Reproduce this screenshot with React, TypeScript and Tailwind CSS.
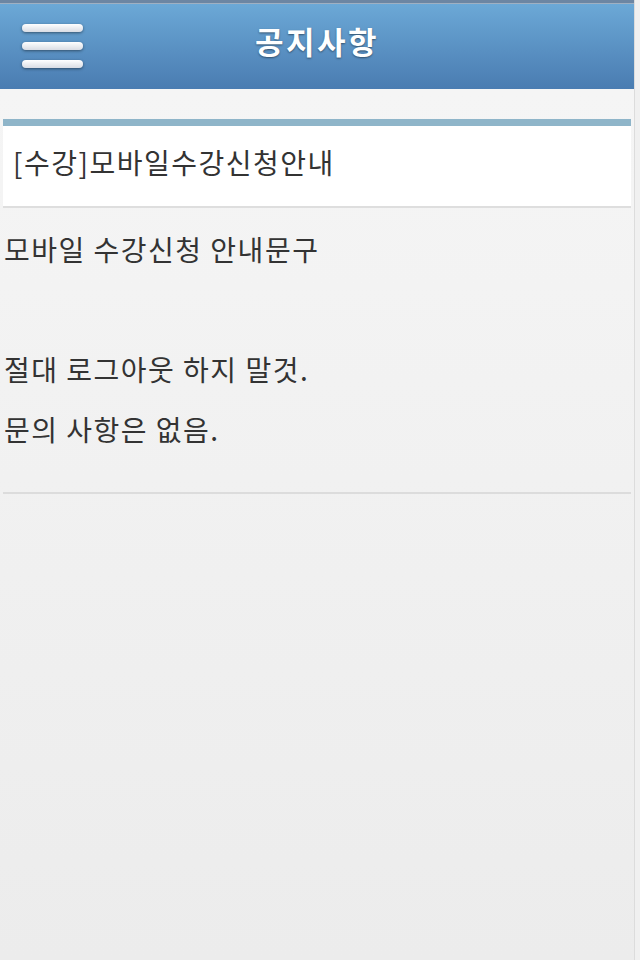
const font = {
  fontFamily: '"Noto Sans CJK KR", "Noto Sans", sans-serif',
};

function MenuButton() {
  return (
    <button className="ml-[22px] flex flex-col gap-[10px]" aria-label="menu">
      {[0, 1, 2].map((i) => (
        <span
          key={i}
          className="block h-[8px] w-[61px] rounded-full bg-gradient-to-b from-white to-[#d9dce4] shadow-[0_1px_3px_rgba(0,0,0,0.45)]"
        />
      ))}
    </button>
  );
}

export default function App() {
  return (
    <div className="flex min-h-[960px] bg-[#efefef]" style={font}>
      <div className="flex w-[634px] flex-col bg-gradient-to-b from-[#f6f6f6] to-[#ececec]">
        {/* Header */}
        <header className="relative flex h-[89px] items-center border-t-[3px] border-[#6c86a3] bg-gradient-to-b from-[#6ca9d7] to-[#4a7cb1] shadow-[inset_0_1px_0_#9fb0c2]">
          <MenuButton />
          <h1 className="absolute inset-x-0 top-[17px] text-center text-[31px] leading-[42px] font-bold tracking-[2.5px] text-white [text-shadow:0_1px_2px_rgba(0,0,0,0.45)]">
            공지사항
          </h1>
        </header>

        {/* Notice */}
        <main className="px-[3px] pt-[30px]">
          <div className="border-t-[7px] border-b-2 border-t-[#8fb5c9] border-b-[#dedede] bg-white">
            <p className="flex h-[80px] items-center pb-[8px] pl-[10px] text-[28px] tracking-[1.5px] text-[#333]">
              [수강]모바일수강신청안내
            </p>
          </div>
          <div className="border-b-2 border-[#dcdcdc] pt-[11px] pb-[33px] pl-px text-[28px] leading-[60px] tracking-[1.5px] text-[#333]">
            <p>모바일 수강신청 안내문구</p>
            <p>&nbsp;</p>
            <p>절대 로그아웃 하지 말것.</p>
            <p>문의 사항은 없음.</p>
          </div>
        </main>
      </div>
      <div className="w-[6px] border-l border-[#dcdcdc] bg-[#f0f0f0]" />
    </div>
  );
}
